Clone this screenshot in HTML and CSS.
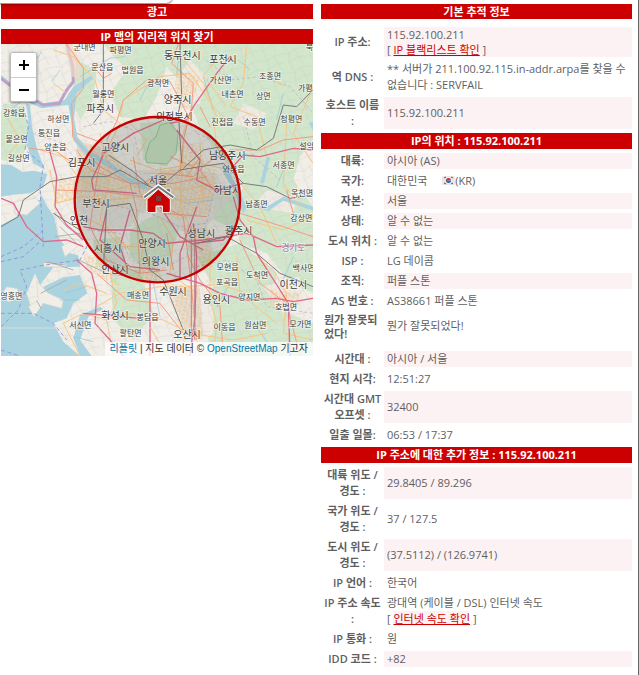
FILE: index.html
```html
<!DOCTYPE html>
<html lang="ko">
<head>
<meta charset="utf-8">
<meta name="viewport" content="width=device-width, initial-scale=1">
<title>IP 115.92.100.211</title>
<link rel="stylesheet" href="styles.css">
</head>
<body>
<div class="popup-edge"></div>
<main class="page">
<section class="column">
<h2 class="bar">광고</h2>
<h2 class="bar bar-map">IP 맵의 지리적 위치 찾기</h2>
<div class="map">
<svg class="map-art" viewBox="3 12 936 936" role="img" aria-label="서울 지도">
<defs>
<pattern id="streets" width="26" height="24" patternUnits="userSpaceOnUse" patternTransform="rotate(12)">
<path d="M0 6H12L16 13H26M8 0V14L4 24M20 0V13L23 24M0 20H18" fill="none" stroke="#f4b66a" stroke-width="2"/>
</pattern>
<pattern id="lanes" width="66" height="58" patternUnits="userSpaceOnUse" patternTransform="rotate(-18)">
<path d="M0 12L20 18L38 8L66 12M14 0L20 18L12 42L18 58M38 8L46 34L66 40M12 42L46 34L50 58" fill="none" stroke="#c9c7c5" stroke-width="1"/>
</pattern>
</defs>
<rect x="3" y="12" width="936" height="936" fill="#f1eee8"/>
<g fill="#d1e6cb">
<path d="M310 12H939V300L900 350 880 420 939 500V760L870 730 800 640 720 610 700 520 730 440 670 350 600 270 560 150 500 80 470 170 430 240 360 230 330 160 380 90Z"/>
<path d="M10 190L70 200 90 290 60 370 3 360V220ZM230 60L290 90 280 180 240 240 215 180ZM390 570L470 520 540 560 510 650 440 690 390 650ZM590 650L720 610 830 700 820 800 939 850V948H640L600 820 640 740ZM330 680L420 690 460 820 400 900 340 840ZM640 450L710 460 710 570 640 540Z"/>
<path d="M240 390L320 400 330 450 250 450ZM280 600L360 590 370 690 290 680ZM420 250L520 240 540 320 500 380 430 360Z"/>
</g>
<g fill="#eeeae2">
<path d="M570 60L620 110 600 190 540 210 520 130ZM730 190L800 220 760 270 700 250ZM760 500L800 450 870 470 900 430 880 520ZM790 740L900 710 910 790 850 820ZM580 780L640 800 640 880 590 910Z"/>
</g>
<g fill="#dedcd6" opacity=".7">
<path d="M230 300L310 330 400 390 560 390 650 400 690 470 620 560 560 580 430 510 390 560 270 570 230 500ZM560 570L620 560 640 640 570 650ZM510 740L600 750 610 890 560 890ZM290 620L370 610 380 720 300 690Z"/>
</g>
<rect x="3" y="12" width="936" height="936" fill="url(#lanes)"/>
<g fill="url(#streets)" opacity=".75">
<path d="M230 300L330 330 400 420 380 500 250 500ZM400 440L540 370 650 390 630 520 540 540 420 500ZM540 300L600 320 620 390 530 380ZM550 560L620 560 640 680 580 700ZM500 730L600 740 610 900 550 900ZM160 410L240 420 250 480 165 490ZM400 690L470 670 490 730 410 730ZM250 640L320 660 360 740 260 690ZM530 90L600 110 570 210 520 190ZM810 750L900 760 880 820 810 800Z"/>
</g>
<g fill="#aad3df">
<path d="M3 373L34 375 68 396 102 392 142 402 130 440 90 460 40 464 3 470ZM3 555L50 530 62 482 120 480 122 462 142 500 163 530 175 590 210 640 235 646 240 680 160 682 120 735 105 700 80 760 92 800 140 780 130 740 190 712 240 705 262 760 220 790 200 835 160 850 190 905 240 948H3Z"/>
<path d="M78 190L85 240 78 310 100 370 135 390 112 330 96 260 90 195Z"/>
<path d="M3 120L30 130 70 180 125 205 205 195 215 250 220 300 250 340 330 385 400 435 440 445V432L380 410 330 365 270 335 232 290 222 235 230 160 280 115 272 108 220 140 194 180 130 190 80 170 40 135 3 104Z"/>
<path d="M665 370L690 400 718 455 740 500 732 520 715 495 705 455 670 400ZM780 430L800 350 811 352 792 430ZM740 485L800 500 850 470 880 480 939 500V512L880 492 850 482 805 512 740 498ZM926 250L939 245V270ZM240 825L300 800 310 808 265 830 240 900 275 948 240 948 220 895Z"/>
</g>
<g fill="#f1eee8" stroke="#d8d4cc" stroke-width="2">
<path d="M45 485L108 475 120 490 80 525 45 520ZM110 725L145 760 190 780 185 805 130 790 102 830 86 800 115 780Z"/>
<path d="M20 740L52 746 62 774 25 785 3 768ZM132 667L198 672 195 682 132 680ZM185 620L225 595 244 610 195 650ZM165 515L230 550 242 600 175 590Z"/>
</g>
<g fill="none" stroke="#aeb1b4" stroke-width="3">
<path d="M163 519L202 562 250 590M180 560L230 610M165 590L240 580M225 655L320 700 390 710M135 667L195 675M122 760L200 720M145 665L220 690M110 782L124 806"/>
</g>
<g fill="none" stroke="#bfa0c8" stroke-width="9">
<path d="M3 115L35 140M105 180L130 195 178 190 200 150 220 125 218 80 200 12"/>
</g>
<path d="M194 12L215 110 242 118 240 60 217 12" fill="#ecd9c9" opacity=".7"/>
<g fill="none" stroke="#8dc6dc" stroke-width="2">
<path d="M30 100L85 60M35 205L70 180M240 110L330 55 375 50M420 180L450 120M715 60L750 90M610 110L640 210M850 160L830 240M850 390L830 440M640 480L560 490 460 450 400 440M460 730L480 830M690 730L650 800M840 740L880 650M760 850L820 930M540 30L530 100"/>
<path d="M195 760L260 740M180 780L240 780M220 890L280 905M125 35L95 80M155 125L180 90M310 130V60"/>
</g>
<g fill="none" stroke="#9199dc" stroke-width="3" stroke-dasharray="12 8">
<path d="M70 200L85 260 75 330 130 375 120 440 130 620M3 665L70 650 120 605M3 650L70 620 130 570M3 860L55 810 80 740 60 690 130 676 240 660 265 610M3 820L100 820 160 850 200 900M3 930L60 948"/>
</g>
<g fill="none" stroke="#b796c3" stroke-width="2" stroke-dasharray="9 7" opacity=".75">
<path d="M250 260L330 245 400 270 420 370 390 390M410 410L330 380 310 320M540 220L590 280 640 300 680 380 720 440M570 420L640 460 620 550 540 560 450 520 360 500 260 480M260 570L360 580 390 660 480 690 560 650M590 680L680 660 770 720 800 800 939 820M480 270L440 330M100 280L190 310 250 390M620 60L690 120 780 110 870 140 939 220M730 230L760 350 840 420"/>
</g>
<path d="M480 255L510 248 535 280 528 340 500 372 440 368 437 348 450 305 468 292Z" fill="#c8e2c2" stroke="#96c99b" stroke-width="3"/>
<g fill="none" stroke="#f9c583" stroke-width="3">
<path d="M160 30L220 50 285 120 310 210 360 250 330 310M360 230L370 180 480 110 570 100 640 200 680 240M500 25L560 70 610 130 650 230M740 20L730 130 690 200 770 230 800 350M939 140L880 280 939 370M860 250L850 430 900 500M640 230L650 320 720 430 780 500 830 610M120 330L190 350 240 420 340 450 420 430M150 390L170 490 240 470 330 480 430 470M300 280L330 400 300 540 390 630M230 520L310 560 360 620 450 620 560 600 700 590M400 540L430 600 420 700M480 530L520 600 510 700 590 760M390 360L470 390 600 370 690 390M430 400L540 400 640 440M450 430L550 450 650 430M440 480L560 480 640 470M480 380L510 520M550 320L540 500 570 560M600 310L610 490M290 800L360 760 480 740 560 740 700 730M310 840L390 820 490 840 570 880 700 900 800 880M630 640L630 780 650 850 640 948M330 700L350 790 320 840 340 948M770 650L820 690 860 760 850 880 939 900M190 750L240 730 320 760M190 850L250 820 320 840M190 850L240 948M710 650L720 760 830 850M650 730L740 760M450 860L500 948"/>
<path d="M650 60L610 105 680 200M800 100L850 140M20 230L60 300 20 350M160 130L200 160M390 250L440 300 410 350M560 250L540 310M740 540L850 570 939 530"/>
</g>
<g fill="none" stroke="#f79c80" stroke-width="3">
<path d="M200 12L250 85 250 145 215 190 218 290 300 380 390 430 520 430 620 410M290 90L310 115 335 100M440 120L370 180 350 245 320 300M440 120L510 125 540 180 560 220M535 12L515 70 580 130 575 200 550 300 540 400M939 290L850 300 780 330 690 330 620 370 580 410 480 400 430 430M230 330L270 390 390 430 410 510 420 700M90 325L170 335 220 370M170 450L310 455 430 470 550 530 570 700 590 900M310 325L290 420 270 560 320 660 420 700 500 690M400 350L420 460 490 520 620 530M510 350L600 390 640 450 720 460M720 520L850 560 939 590M720 600L780 730 860 790 900 948M560 640L600 720 660 800 670 948M860 450L880 520M290 700L380 780 480 790 550 880"/>
<path d="M230 280L310 310M600 200L630 260M500 580L520 690M600 350L560 410"/>
</g>
<g fill="none" stroke="#e0688a" stroke-width="4">
<path d="M690 50L650 100 580 200 560 240 510 250M490 240L400 280 310 340M147 325L170 410 165 500 200 555 250 600M310 345L275 420 280 450 410 460M3 475L40 490 80 560 130 605 200 600 250 620M939 330L880 325 780 350 730 345 690 390M230 660L275 700 290 760 285 850 330 900 370 948M250 560L300 570 390 570 460 580 500 610 610 600 740 580 830 620 939 615M320 510L300 600 390 680 480 690M500 700L600 730 660 760 740 780 830 775 880 785 939 775M540 720L540 640 590 500M730 430L650 450 590 420 600 360 530 270M700 470L720 540 760 590 770 640 840 750 865 790 870 948M570 948L585 830 590 650 580 550M450 720V948M250 820L420 835M390 510L360 620 380 680M480 500L540 590 610 630M710 550L670 600 580 610"/>
</g>
<g fill="none" stroke="#7c7c7c" stroke-width="3">
<path d="M310 12V210L280 250M540 12L545 170 535 220 545 370M939 150L890 200 850 195 820 295 770 330 690 315 610 330 550 385M3 560L55 530 70 480 150 425 230 410 320 410 360 390 430 430 470 450 540 390 600 380 670 370 730 430 800 440 870 475 939 465M390 490L430 600 450 690 490 720 550 870M390 490L320 500 310 690M590 610L680 590 770 640 840 700 939 740M160 520L240 570M325 345L400 395 450 440"/>
</g>
<path d="M574 560V900M584 560V900" stroke="#bb8396" stroke-width="3"/>
<path d="M3 864H939" stroke="#e4e6e3" stroke-width="2"/>
<g class="town">
<text x="254" y="30">군내면</text><text x="362" y="40">파평면</text><text x="307" y="91">문산읍</text><text x="398" y="98">법원읍</text><text x="474" y="138">광적면</text><text x="310" y="172">월롱면</text><text x="42" y="228">강화읍</text><text x="175" y="247">하성면</text><text x="147" y="289">통진읍</text><text x="50" y="307">불은면</text><text x="166" y="331">양촌읍</text><text x="56" y="362">길상면</text><text x="662" y="130">가산면</text><text x="698" y="172">내촌면</text><text x="790" y="177">상면</text><text x="810" y="116">조종면</text><text x="916" y="154">가평</text><text x="928" y="30">북</text><text x="667" y="255">진접읍</text><text x="764" y="256">수동면</text><text x="874" y="247">청평면</text><text x="920" y="328">설악</text><text x="851" y="384">서종면</text><text x="701" y="397">와부읍</text><text x="906" y="468">옥천면</text><text x="770" y="501">남종면</text><text x="904" y="543">강상면</text><text x="683" y="691">모현읍</text><text x="771" y="714">도척면</text><text x="681" y="736">포곡읍</text><text x="911" y="693">백사면</text><text x="748" y="781">양지면</text><text x="858" y="811">호법면</text><text x="414" y="773">매송면</text><text x="34" y="777">영흥면</text><text x="443" y="839">봉담읍</text><text x="241" y="865">서신면</text><text x="392" y="889">팔탄면</text><text x="674" y="871">이동읍</text><text x="766" y="865">원삼면</text><text x="901" y="862">모가면</text>
</g>
<g class="city">
<text x="547" y="58">동두천시</text><text x="669" y="68">포천시</text><text x="533" y="190">양주시</text><text x="301" y="216">파주시</text><text x="523" y="239">의정부시</text><text x="346" y="332">고양시</text><text x="245" y="377">김포시</text><text x="682" y="356">남양주시</text><text x="474" y="431">서울</text><text x="682" y="462">하남시</text><text x="288" y="502">부천시</text><text x="237" y="553">인천</text><text x="604" y="592">성남시</text><text x="716" y="582">광주시</text><text x="456" y="621">안양시</text><text x="323" y="637">시흥시</text><text x="467" y="674">의왕시</text><text x="345" y="699">안산시</text><text x="519" y="765">수원시</text><text x="649" y="788">용인시</text><text x="880" y="744">이천시</text><text x="345" y="836">화성시</text><text x="561" y="893">오산시</text><text class="province" x="880" y="634">경기도</text>
</g>
<circle cx="472" cy="479" r="248" fill="#4a554a" fill-opacity=".2" stroke="#c40000" stroke-width="7"/>
<g>
<path d="M498 445H511V470H498Z" fill="#777" stroke="#fff" stroke-width="2"/>
<path d="M441 478L475 447 511 478V513Q511 518 505 518H487V498H468V518H447Q441 518 441 512Z" fill="#c00" stroke="#fff" stroke-width="3"/>
<path d="M431 473L475 439 521 473" fill="none" stroke="#fff" stroke-width="12"/>
<path d="M432 472L475 440 520 472" fill="none" stroke="#777" stroke-width="6"/>
<path d="M470 470H482V482H470Z" fill="#b22" stroke="#555" stroke-width="3"/>
</g>
</svg>
<div class="zoom-control"><button type="button" aria-label="확대"><svg viewBox="0 0 10 10"><path d="M5 0V10M0 5H10"/></svg></button><button type="button" aria-label="축소"><svg viewBox="0 0 10 10"><path d="M0 5H10"/></svg></button></div>
<div class="attribution"><a href="#">리플릿</a> | 지도 데이터 © <a href="#">OpenStreetMap</a> 기고자</div>
</div>
</section>
<section class="column">
<h2 class="bar">기본 추적 정보</h2>
<table class="info">
<colgroup><col class="label-col"><col></colgroup>
<tbody>
<tr class="shade compact"><th scope="row">IP 주소:</th><td>115.92.100.211<br>[ <a href="#">IP 블랙리스트 확인</a> ]</td></tr>
<tr><th scope="row">역 DNS :</th><td>** 서버가 211.100.92.115.in-addr.arpa를 찾을 수<br>없습니다 : SERVFAIL</td></tr>
<tr class="shade"><th scope="row">호스트 이름<br>:</th><td>115.92.100.211</td></tr>
<tr><th class="band" colspan="2">IP의 위치 : 115.92.100.211</th></tr>
<tr class="shade"><th scope="row">대륙:</th><td>아시아 (AS)</td></tr>
<tr><th scope="row">국가:</th><td>대한민국 <svg class="flag" viewBox="0 0 13 9" role="img" aria-label="KR"><path fill="#e9e9e9" d="M0 0H13V9H0Z"/><path d="M4 5A2.5 2.5 0 0 1 9 4Z" fill="#d33"/><path d="M4 4.500A2.500 2.500 0 0 0 9 4.500Z" fill="#3565b5"/><path d="M2 2L4 1M9 1L11 2M2 7L4 8M9 8L11 7" stroke="#555"/></svg>(KR)</td></tr>
<tr class="shade"><th scope="row">자본:</th><td>서울</td></tr>
<tr class="shade"><th scope="row">상태:</th><td>알 수 없는</td></tr>
<tr><th scope="row">도시 위치 :</th><td>알 수 없는</td></tr>
<tr><th scope="row">ISP :</th><td>LG 데이콤</td></tr>
<tr class="shade"><th scope="row">조직:</th><td>퍼플 스톤</td></tr>
<tr><th scope="row">AS 번호 :</th><td>AS38661 퍼플 스톤</td></tr>
<tr class="notice"><th scope="row">뭔가 잘못되<br>었다!</th><td>뭔가 잘못되었다!</td></tr>
<tr class="shade"><th scope="row">시간대 :</th><td>아시아 / 서울</td></tr>
<tr><th scope="row">현지 시각:</th><td>12:51:27</td></tr>
<tr class="shade"><th scope="row">시간대 GMT<br>오프셋 :</th><td>32400</td></tr>
<tr><th scope="row">일출 일몰:</th><td>06:53 / 17:37</td></tr>
<tr><th class="band" colspan="2">IP 주소에 대한 추가 정보 : 115.92.100.211</th></tr>
<tr class="shade"><th scope="row">대륙 위도 /<br>경도 :</th><td>29.8405 / 89.296</td></tr>
<tr><th scope="row">국가 위도 /<br>경도 :</th><td>37 / 127.5</td></tr>
<tr class="shade"><th scope="row">도시 위도 /<br>경도 :</th><td>(37.5112) / (126.9741)</td></tr>
<tr><th scope="row">IP 언어 :</th><td>한국어</td></tr>
<tr><th scope="row">IP 주소 속도<br>:</th><td>광대역 (케이블 / DSL) 인터넷 속도<br>[ <a href="#">인터넷 속도 확인</a> ]</td></tr>
<tr><th scope="row">IP 통화 :</th><td>원</td></tr>
<tr class="shade"><th scope="row">IDD 코드 :</th><td>+82</td></tr>
</tbody>
</table>
</section>
</main>
</body>
</html>
```
FILE: styles.css
```css
* {
  box-sizing: border-box;
}

body {
  margin: 0;
  background: #fff;
  color: #5f5f5f;
  font-family: "Open Sans", "Noto Sans CJK KR", sans-serif;
  font-size: 11px;
  line-height: 16px;
}

.page {
  display: grid;
  grid-template-columns: minmax(0, 312fr) minmax(0, 311fr);
  gap: 8px;
  min-height: 100vh;
  padding: 4px 6px 4px 1px;
  border-right: 1px solid #666;
}

.popup-edge {
  position: absolute;
  top: -12px;
  left: -12px;
  width: 184px;
  height: 15px;
  border-radius: 6px;
  background: #fff;
  box-shadow: 0 1px 3px rgba(0, 0, 0, 0.6);
}

.bar {
  height: 15px;
  margin: 0;
  background: #c00;
  color: #fff;
  font-size: 11px;
  font-weight: 700;
  line-height: 15px;
  text-align: center;
}

.bar-map {
  margin-top: 10px;
}

.map {
  position: relative;
  aspect-ratio: 1;
  overflow: hidden;
}

.map-art {
  display: block;
  width: 100%;
  height: 100%;
}

.map-art text {
  fill: #3c3c3c;
  stroke: #fff;
  stroke-opacity: 0.6;
  stroke-width: 5px;
  paint-order: stroke;
  text-anchor: middle;
}

.town {
  font-size: 24px;
}

.city {
  font-size: 30px;
}

.city .province {
  fill: #8e6b98;
  font-size: 26px;
}

.zoom-control {
  position: absolute;
  top: 8px;
  left: 9px;
  width: 27px;
  overflow: hidden;
  border: 1px solid #bbb;
  border-radius: 3px;
  box-shadow: 0 1px 3px rgba(0, 0, 0, 0.5);
}

.zoom-control button {
  display: flex;
  align-items: center;
  justify-content: center;
  width: 100%;
  height: 24px;
  padding: 0;
  border: 0;
  background: #fff;
}

.zoom-control button + button {
  border-top: 1px solid #ccc;
}

.zoom-control svg {
  width: 10px;
  height: 10px;
  stroke: #000;
  stroke-width: 2;
}

.attribution {
  position: absolute;
  right: 0;
  bottom: 0;
  padding: 0 5px;
  background: rgba(255, 255, 255, 0.75);
  color: #333;
  font-family: "Liberation Sans", "Noto Sans CJK KR", sans-serif;
  font-size: 10px;
  line-height: 14px;
  white-space: nowrap;
}

.attribution a {
  color: #0078a8;
  text-decoration: none;
}

.info {
  width: 100%;
  margin-top: 4px;
  border-collapse: separate;
  border-spacing: 0 4px;
  table-layout: fixed;
}

.label-col {
  width: 63px;
}

.info th,
.info td {
  padding: 0;
  vertical-align: middle;
  white-space: nowrap;
}

.info th {
  font-weight: 600;
  text-align: center;
}

.info td {
  padding-left: 3px;
  text-align: left;
}

.info .band {
  background: #c00;
  color: #fff;
  font-weight: 700;
}

.shade td {
  background: #fcf2f3;
}

.compact td {
  line-height: 15px;
}

.info .notice th {
  padding: 0 0 6px 3px;
  line-height: 14px;
  text-align: left;
}

.info .notice td {
  padding-bottom: 8px;
}

.info a {
  background: #fcf2f3;
  color: #c00;
}

.flag {
  width: 13px;
  height: 9px;
  margin-left: 12px;
}
```
